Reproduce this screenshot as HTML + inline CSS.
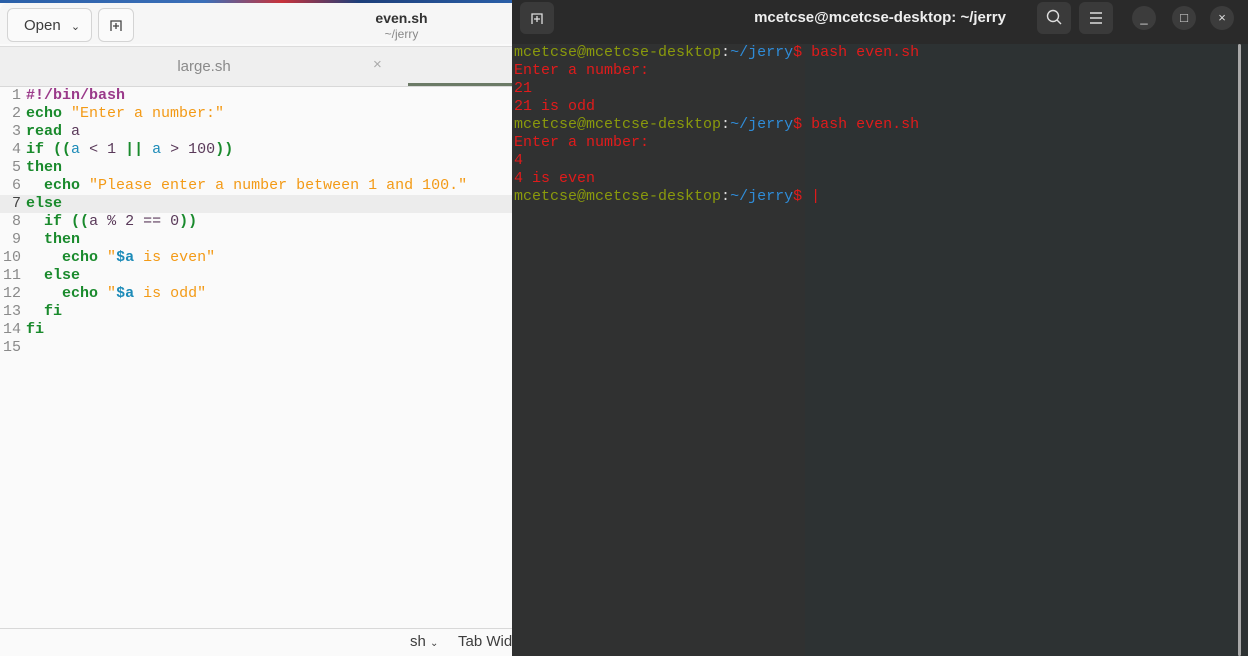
<!DOCTYPE html>
<html><head><meta charset="utf-8"><style>
*{margin:0;padding:0;box-sizing:border-box}
html,body{width:1248px;height:656px;overflow:hidden}
body{position:relative;background:#2d3233;font-family:"Liberation Sans",sans-serif}
.ed{position:absolute;left:0;top:0;width:512px;height:656px;background:#fafafa}
.wall{position:absolute;left:0;top:0;width:512px;height:3px;background:linear-gradient(90deg,#2a5fa8,#3b6fb8 40%,#c8323a 55%,#1d3f7a 70%,#2a5fa8)}
.hdr{position:absolute;top:3px;left:0;width:512px;height:41px;background:#f6f6f6;border-radius:8px 0 0 0}
.btn{position:absolute;top:8px;height:34px;border:1px solid #d4d4d4;border-radius:6px;background:#fafafa;color:#3d3d3d;font-size:15px}
.tabs{position:absolute;top:46px;left:0;width:512px;height:41px;background:#efefef;border-top:1px solid #dcdcdc;border-bottom:1px solid #d8d8d8}
.code{position:absolute;top:87px;left:0;width:512px;font-family:"Liberation Mono",monospace;font-size:15px;line-height:18px}
.ln{display:block;height:18px;white-space:pre}
.n{display:inline-block;width:26px;text-align:right;color:#8a8a8a;padding-right:5px}
.k{color:#198a2c;font-weight:bold}.s{color:#f39a16}.v{color:#1c8bb8}.p{color:#9a3a8a;font-weight:bold}.d{color:#5a3a5a}
.cur{background:#ececec}
.status{position:absolute;top:628px;left:0;width:512px;height:28px;border-top:1px solid #d8d8d8;background:#fafafa;font-size:15px;color:#3d3d3d;white-space:nowrap;overflow:hidden}
.term{position:absolute;left:512px;top:0;width:736px;height:656px;background:#2d3233}
.tleft{position:absolute;left:0;top:44px;width:293px;height:612px;background:#303131}
.tbar{position:absolute;left:0;top:0;width:736px;height:44px;background:#2a2a2a}
.tb{position:absolute;top:2px;width:34px;height:32px;background:#3a3a3a;border-radius:6px}
.circ{position:absolute;top:6px;width:24px;height:24px;border-radius:50%;background:#3c3c3c;color:#ddd;font-size:13px;text-align:center;line-height:24px}
.tt{position:absolute;top:44px;left:2px;font-family:"Liberation Mono",monospace;font-size:15px;line-height:18px;color:#e01b1b;white-space:pre}
.g{color:#8a9a0c}.b{color:#2f8cd8}
</style></head><body>
<div class="ed">
<div class="wall"></div>
<div class="hdr"></div>
<div class="btn" style="left:7px;width:85px;padding:8px 0 0 16px">Open <span style="font-size:11px;margin-left:6px">&#8964;</span></div>
<div class="btn" style="left:98px;width:36px"><svg width="34" height="32" viewBox="0 0 34 32"><path d="M12 22V12h10v10M17 14v6M14 17h6" stroke="#444" stroke-width="1.3" fill="none"/></svg></div>
<div style="position:absolute;top:10px;left:0;width:803px;text-align:center;font-weight:bold;font-size:14px;color:#333">even.sh</div>
<div style="position:absolute;top:27px;left:0;width:803px;text-align:center;font-size:12px;color:#888">~/jerry</div>
<div class="tabs">
<div style="position:absolute;left:0;width:408px;top:11px;text-align:center;color:#8a8a8a;font-size:15px">large.sh</div>
<div style="position:absolute;left:373px;top:9px;color:#aaa;font-size:15px">×</div>
<div style="position:absolute;left:408px;top:36px;width:104px;height:3px;background:#6b7a66"></div>
</div>
<div class="code">
<div class="ln"><span class="n">1</span><span class="p">#!/bin/bash</span></div>
<div class="ln"><span class="n">2</span><span class="k">echo</span> <span class="s">"Enter a number:"</span></div>
<div class="ln"><span class="n">3</span><span class="k">read</span> <span class="d">a</span></div>
<div class="ln"><span class="n">4</span><span class="k">if</span> <span class="k">((</span><span class="v">a</span> <span class="d">&lt; 1</span> <span class="k">||</span> <span class="v">a</span> <span class="d">&gt; 100</span><span class="k">))</span></div>
<div class="ln"><span class="n">5</span><span class="k">then</span></div>
<div class="ln"><span class="n">6</span>  <span class="k">echo</span> <span class="s">"Please enter a number between 1 and 100."</span></div>
<div class="ln cur"><span class="n" style="color:#444">7</span><span class="k">else</span></div>
<div class="ln"><span class="n">8</span>  <span class="k">if</span> <span class="k">((</span><span class="d">a % 2 == 0</span><span class="k">))</span></div>
<div class="ln"><span class="n">9</span>  <span class="k">then</span></div>
<div class="ln"><span class="n">10</span>    <span class="k">echo</span> <span class="s">"<span class="v" style="font-weight:bold">$a</span> is even"</span></div>
<div class="ln"><span class="n">11</span>  <span class="k">else</span></div>
<div class="ln"><span class="n">12</span>    <span class="k">echo</span> <span class="s">"<span class="v" style="font-weight:bold">$a</span> is odd"</span></div>
<div class="ln"><span class="n">13</span>  <span class="k">fi</span></div>
<div class="ln"><span class="n">14</span><span class="k">fi</span></div>
<div class="ln"><span class="n">15</span></div>
</div>
<div class="status"><span style="position:absolute;left:410px;top:4px">sh <span style="font-size:10px">&#8964;</span></span><span style="position:absolute;left:458px;top:4px">Tab Width</span></div>
</div>
<div class="term">
<div class="tleft"></div>
<div class="tbar">
<div class="tb" style="left:8px"><svg width="34" height="32" viewBox="0 0 34 32"><path d="M12 22V12h10v10M17 14v6M14 17h6" stroke="#ddd" stroke-width="1.3" fill="none"/></svg></div>
<div style="position:absolute;left:0;width:736px;top:9px;text-align:center;color:#eee;font-weight:bold;font-size:15px">mcetcse@mcetcse-desktop: ~/jerry</div>
<div class="tb" style="left:525px"><svg width="34" height="32" viewBox="0 0 34 32"><circle cx="16" cy="14" r="5.5" stroke="#ddd" stroke-width="1.4" fill="none"/><path d="M20 18l4 4" stroke="#ddd" stroke-width="1.4"/></svg></div>
<div class="tb" style="left:567px"><svg width="34" height="32" viewBox="0 0 34 32"><path d="M11 11h12M11 16h12M11 21h12" stroke="#ddd" stroke-width="1.4"/></svg></div>
<div class="circ" style="left:620px">_</div>
<div class="circ" style="left:660px">&#9633;</div>
<div class="circ" style="left:698px">×</div>
</div>
<div class="tt"><span class="g">mcetcse@mcetcse-desktop</span><span style="color:#ddd">:</span><span class="b">~/jerry</span>$ bash even.sh
Enter a number:
21
21 is odd
<span class="g">mcetcse@mcetcse-desktop</span><span style="color:#ddd">:</span><span class="b">~/jerry</span>$ bash even.sh
Enter a number:
4
4 is even
<span class="g">mcetcse@mcetcse-desktop</span><span style="color:#ddd">:</span><span class="b">~/jerry</span>$ |</div>
<div style="position:absolute;left:726px;top:44px;width:3px;height:612px;background:#a8a8a8;border-radius:2px"></div>
</div>
</body></html>
